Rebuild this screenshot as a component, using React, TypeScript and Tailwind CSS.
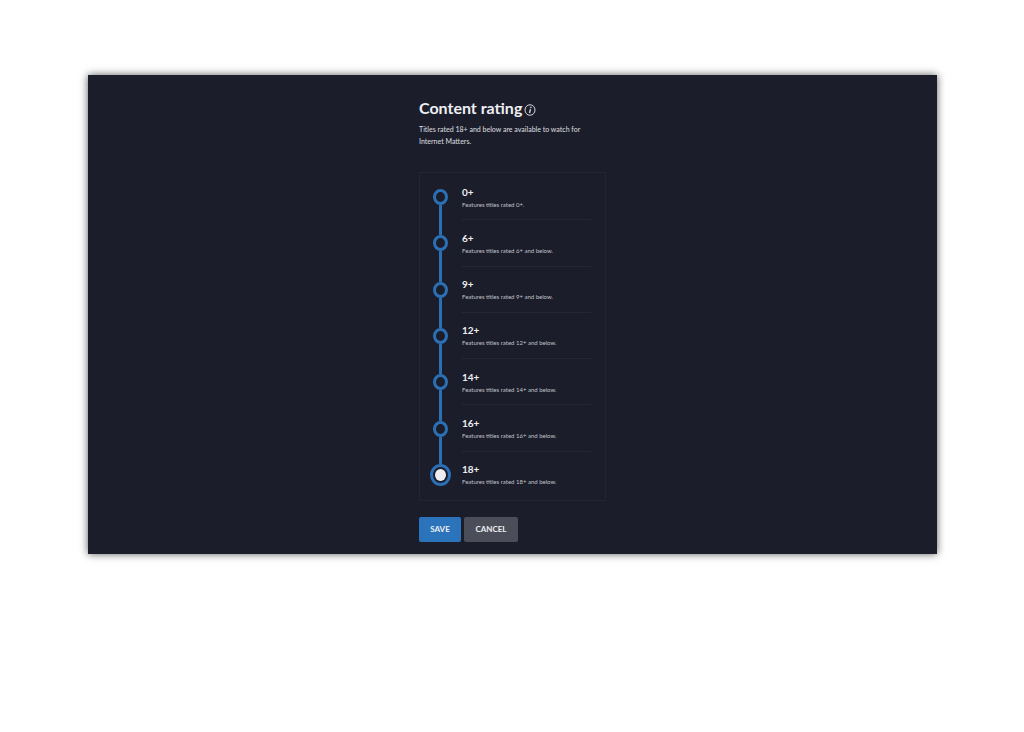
import { useState } from "react";
import clsx from "clsx";

interface IRating {
  value: string;
  description: string;
}

const ratings: IRating[] = [
  { value: "0+", description: "Features titles rated 0+." },
  { value: "6+", description: "Features titles rated 6+ and below." },
  { value: "9+", description: "Features titles rated 9+ and below." },
  { value: "12+", description: "Features titles rated 12+ and below." },
  { value: "14+", description: "Features titles rated 14+ and below." },
  { value: "16+", description: "Features titles rated 16+ and below." },
  { value: "18+", description: "Features titles rated 18+ and below." },
];

const InfoIcon = () => (
  <svg
    viewBox="0 0 24 24"
    className="mt-1 h-3 w-3 text-[#d5d7de]"
    fill="none"
    stroke="currentColor"
    strokeWidth="2"
    aria-hidden="true"
  >
    <ellipse cx="12" cy="12" rx="10" ry="10.5" />
    <path d="M13 10.5 11 18" strokeWidth="2.8" />
    <circle cx="13.6" cy="6.8" r="1" />
  </svg>
);

const App = () => {
  const [selected, setSelected] = useState("18+");

  return (
    <div className="min-h-screen bg-white pt-[75px] pr-[87px] pl-[88px] font-['Lato',sans-serif]">
      <main className="bg-[#1b1d2a] pt-6 pb-3 shadow-[0_0_8px_0_rgba(0,0,0,0.65)]">
        <form
          className="mx-auto w-[187px]"
          onSubmit={(e) => e.preventDefault()}
        >
          {/* Heading */}
          <div className="flex items-center gap-0.5">
            <h1 className="text-[16px] leading-[18px] font-bold whitespace-nowrap text-[#eeeff3]">
              Content rating
            </h1>
            <InfoIcon />
          </div>
          <p className="mt-1.5 w-[172px] text-[7px] leading-3 font-medium text-[#d5d7de]">
            Titles rated 18+ and below are available to watch for Internet
            Matters.
          </p>

          {/* Rating scale */}
          <div
            role="radiogroup"
            aria-label="Content rating"
            className="mt-[25px] grid min-h-[329px] auto-rows-fr border border-[#222532] pt-px pr-3.5 pb-0.5 pl-2.5"
          >
            {ratings.map((rating, index) => {
              const isLast = index === ratings.length - 1;
              return (
                <label
                  key={rating.value}
                  className="flex cursor-pointer gap-[11px]"
                >
                  <span className="flex w-[21px] flex-col items-center">
                    <span
                      className={clsx(
                        "w-[3px] flex-1",
                        index > 0 && "bg-[#2b6fb5]"
                      )}
                    />
                    <input
                      type="radio"
                      name="rating"
                      value={rating.value}
                      checked={selected === rating.value}
                      onChange={() => setSelected(rating.value)}
                      className="h-4 w-[15px] shrink-0 appearance-none rounded-[50%] border-[3px] border-[#2b6fb5] checked:h-[22px] checked:w-[21px] checked:bg-[#eeeef2] checked:bg-clip-content checked:p-[2px]"
                    />
                    <span
                      className={clsx("w-[3px] flex-1", !isLast && "bg-[#2b6fb5]")}
                    />
                  </span>
                  <span
                    className={clsx(
                      "flex flex-1 flex-col justify-center border-b pt-0.5",
                      isLast ? "border-transparent" : "border-[#242734]"
                    )}
                  >
                    <span className="text-[10px] leading-[14px] font-bold text-[#eeeff3]">
                      {rating.value}
                    </span>
                    <span className="text-[6px] leading-3 whitespace-nowrap text-[#c0c2ca]">
                      {rating.description}
                    </span>
                  </span>
                </label>
              );
            })}
          </div>

          {/* Actions */}
          <div className="mt-4 flex gap-[3px]">
            <button
              type="submit"
              className="h-[25px] w-[42px] rounded-[2px] bg-[#2b73bb] pb-0.5 text-[8px] font-bold text-[#eeeff3]"
            >
              SAVE
            </button>
            <button
              type="button"
              onClick={() => setSelected("18+")}
              className="h-[25px] w-[54px] rounded-[2px] bg-[#4b4d58] pb-0.5 text-[8px] font-bold text-[#eeeff3]"
            >
              CANCEL
            </button>
          </div>
        </form>
      </main>
    </div>
  );
};

export default App;
